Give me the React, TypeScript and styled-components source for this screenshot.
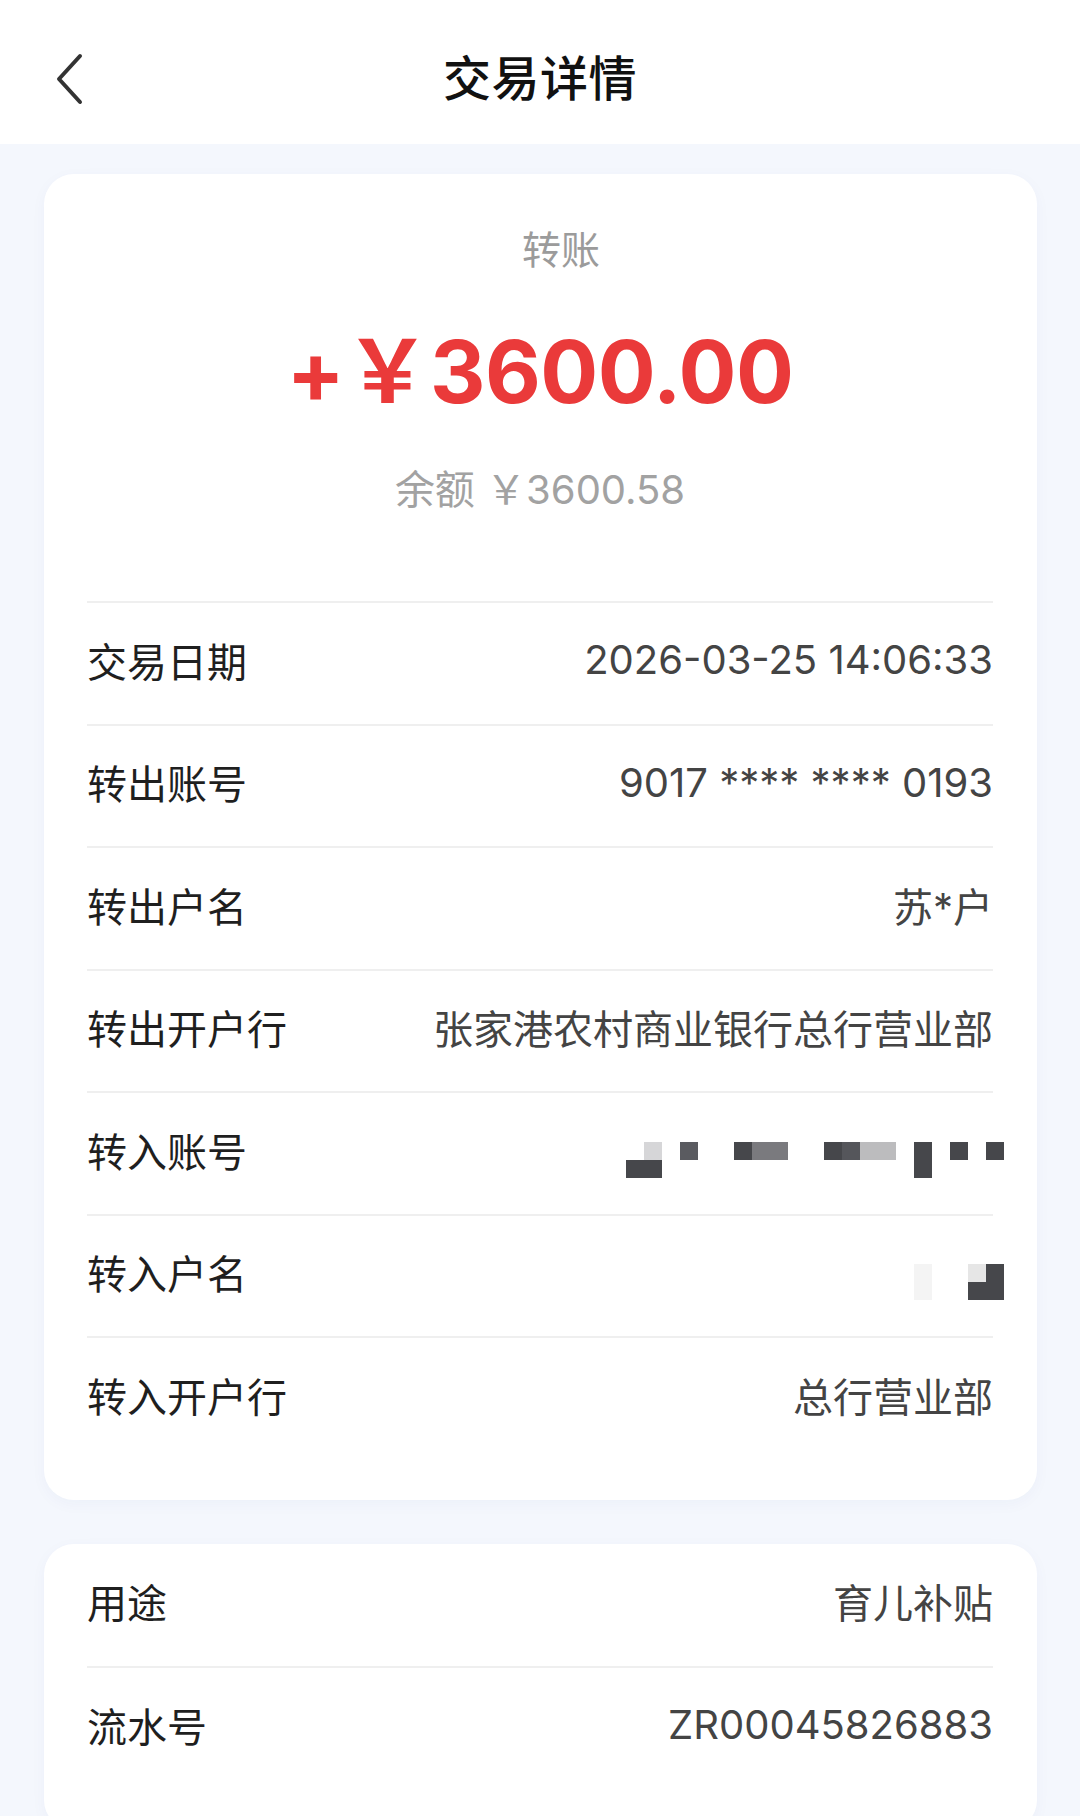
import React from 'react'
import styled, { createGlobalStyle } from 'styled-components'

const BG = '#F4F7FD'
const LABEL = '#1f1f1f'
const VALUE = '#444444'
const MUTED = '#9b9b9b'
const RED = '#EA3A3A'
const LINE = '#EFEFEF'
const FONT = `Inter, "Noto Sans CJK SC", "Noto Sans", sans-serif`

const GlobalStyle = createGlobalStyle`
  html, body {
    margin: 0;
    padding: 0;
    background: ${BG};
    font-family: ${FONT};
    -webkit-font-smoothing: antialiased;
  }
`

const Page = styled.div`
  width: 1080px;
  min-height: 1816px;
  background: ${BG};
`

const Header = styled.header`
  height: 144px;
  box-sizing: border-box;
  padding-top: 14px;
  background: #fff;
  display: grid;
  grid-template-columns: 1fr auto 1fr;
  align-items: center;
`

const BackButton = styled.button`
  justify-self: start;
  margin-left: 54px;
  padding: 0;
  border: none;
  background: transparent;
  display: flex;
  align-items: center;
`

const Title = styled.h1`
  margin: 0;
  font-size: 48px;
  line-height: 60px;
  font-weight: 500;
  color: #111;
  letter-spacing: 0.5px;
`

const Content = styled.main`
  padding: 30px 43px 0 44px;
  display: flex;
  flex-direction: column;
  gap: 44px;
`

const Card = styled.section<{ $top?: number }>`
  background: #fff;
  border-radius: 30px;
  box-shadow: 0 4px 16px rgba(40, 70, 140, 0.035);
  padding: ${({ $top }) => $top ?? 0}px 44px 41px 43px;
`

const Summary = styled.div`
  text-align: center;
  padding-bottom: 84px;
`

const TypeText = styled.div`
  padding-left: 42px;
  font-size: 39px;
  line-height: 54px;
  color: ${MUTED};
`

const Amount = styled.div`
  margin-top: 45px;
  font-size: 86px;
  line-height: 100px;
  font-weight: 700;
  color: ${RED};
  letter-spacing: -0.5px;
`

const Balance = styled.div`
  margin-top: 41px;
  font-size: 40px;
  line-height: 54px;
  color: #a2a2a2;
`

const Row = styled.div<{ $first?: boolean }>`
  height: 122.5px;
  box-sizing: border-box;
  padding-bottom: 7px;
  border-top: ${({ $first }) => ($first ? 'none' : `2px solid ${LINE}`)};
  display: flex;
  align-items: center;
  justify-content: space-between;
  font-size: 40px;
`

const Label = styled.span`
  color: ${LABEL};
  white-space: nowrap;
`

const Value = styled.span`
  color: ${VALUE};
  white-space: nowrap;
  text-align: right;
`

const MosaicGrid = styled.div<{ $cols: number }>`
  display: grid;
  grid-template-columns: repeat(${({ $cols }) => $cols}, 18px);
  grid-auto-rows: 18px;
  margin-top: 20px;
  margin-right: -11px;
`

const Cell = styled.div<{ $c: string }>`
  background: ${({ $c }) => $c};
`

const PALETTE: Record<string, string> = {
  '.': 'transparent',
  d: '#46474B',
  n: '#55565B',
  m: '#5A5B60',
  g: '#7A7A7E',
  k: '#BCBCBE',
  l: '#D6D6D8',
  e: '#E6E6E6',
  f: '#F4F4F4',
}

const Mosaic = ({ rows }: { rows: string[] }) => (
  <MosaicGrid $cols={rows[0].length}>
    {rows.flatMap((r, i) =>
      r.split('').map((ch, j) => <Cell key={`${i}-${j}`} $c={PALETTE[ch]} />)
    )}
  </MosaicGrid>
)

const BackIcon = () => (
  <svg width="30" height="52" viewBox="0 0 30 52" fill="none">
    <path
      d="M26 3 L5 26 L26 49"
      stroke="#333"
      strokeWidth="4"
      strokeLinecap="round"
      strokeLinejoin="round"
    />
  </svg>
)

const details: [string, React.ReactNode][] = [
  ['交易日期', '2026-03-25 14:06:33'],
  ['转出账号', '9017 **** **** 0193'],
  ['转出户名', '苏*户'],
  ['转出开户行', '张家港农村商业银行总行营业部'],
  ['转入账号', <Mosaic rows={['.l.m..dgg..dnkk.d.d.d', 'dd..............d....']} />],
  ['转入户名', <Mosaic rows={['f..ed', 'f..dd']} />],
  ['转入开户行', '总行营业部'],
]

const extra: [string, string][] = [
  ['用途', '育儿补贴'],
  ['流水号', 'ZR00045826883'],
]

export default function App() {
  return (
    <Page>
      <GlobalStyle />
      <Header>
        <BackButton aria-label="返回">
          <BackIcon />
        </BackButton>
        <Title>交易详情</Title>
        <div />
      </Header>
      <Content>
        <Card $top={49}>
          <Summary>
            <TypeText>转账</TypeText>
            <Amount>+￥3600.00</Amount>
            <Balance>余额 ￥3600.58</Balance>
          </Summary>
          {details.map(([label, value]) => (
            <Row key={label}>
              <Label>{label}</Label>
              {typeof value === 'string' ? <Value>{value}</Value> : value}
            </Row>
          ))}
        </Card>
        <Card>
          {extra.map(([label, value], i) => (
            <Row key={label} $first={i === 0}>
              <Label>{label}</Label>
              <Value>{value}</Value>
            </Row>
          ))}
        </Card>
      </Content>
    </Page>
  )
}
